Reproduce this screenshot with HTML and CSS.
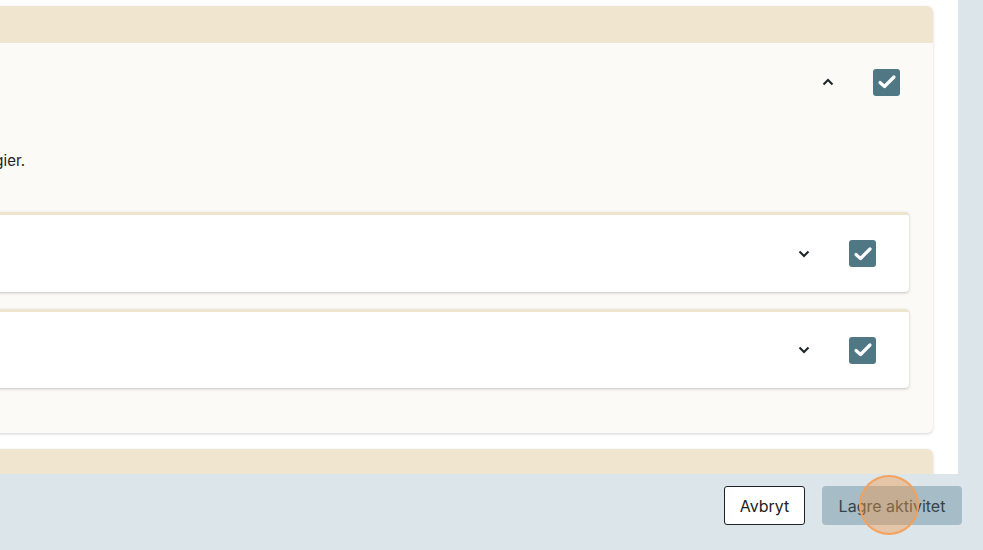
FILE: index.html
```html
<!DOCTYPE html>
<html lang="no">
<head>
<meta charset="utf-8">
<link rel="stylesheet" href="styles.css">
</head>
<body>
<div class="screen">
  <div class="top">
    <main class="main">
      <section class="card">
        <div class="card-head"></div>
        <div class="card-body">
          <div class="row">
            <span class="row-title"></span>
            <svg class="chev" width="12" height="8" viewBox="0 0 12 8"><path d="M1.5 6.5 L6 2 L10.5 6.5" fill="none" stroke="#1d2327" stroke-width="2"/></svg>
            <span class="check"><svg width="20" height="16" viewBox="0 0 20 16"><path d="M3 8.5 L7.5 12.5 L17 3" fill="none" stroke="#fff" stroke-width="3.2" stroke-linecap="round" stroke-linejoin="round"/></svg></span>
          </div>
          <p class="desc">Aktiviteten egner seg for å utforske nye læringsstrategier.</p>
          <div class="sub">
            <span class="row-title"></span>
            <svg class="chev" width="12" height="8" viewBox="0 0 12 8"><path d="M1.5 1.5 L6 6 L10.5 1.5" fill="none" stroke="#1d2327" stroke-width="2"/></svg>
            <span class="check"><svg width="20" height="16" viewBox="0 0 20 16"><path d="M3 8.5 L7.5 12.5 L17 3" fill="none" stroke="#fff" stroke-width="3.2" stroke-linecap="round" stroke-linejoin="round"/></svg></span>
          </div>
          <div class="sub">
            <span class="row-title"></span>
            <svg class="chev" width="12" height="8" viewBox="0 0 12 8"><path d="M1.5 1.5 L6 6 L10.5 1.5" fill="none" stroke="#1d2327" stroke-width="2"/></svg>
            <span class="check"><svg width="20" height="16" viewBox="0 0 20 16"><path d="M3 8.5 L7.5 12.5 L17 3" fill="none" stroke="#fff" stroke-width="3.2" stroke-linecap="round" stroke-linejoin="round"/></svg></span>
          </div>
        </div>
      </section>
      <section class="card">
        <div class="card-head"></div>
      </section>
    </main>
    <aside class="strip"></aside>
  </div>
  <footer class="footer">
    <button class="btn btn-cancel">Avbryt</button>
    <button class="btn btn-save">Lagre aktivitet</button>
    <span class="click-dot"></span>
  </footer>
</div>
</body>
</html>
```
FILE: styles.css
```css
* { box-sizing: border-box; }
html, body { margin: 0; padding: 0; }
body {
  font-family: Inter, "Noto Sans", sans-serif;
  color: #1d2327;
  background: #dbe5ea;
  width: 983px;
  height: 550px;
  overflow: hidden;
}
.screen { display: flex; flex-direction: column; height: 550px; }
.top { display: flex; height: 474px; }
.main {
  width: 958px;
  background: #fff;
  overflow: hidden;
  padding: 6px 25px 0 0;
  display: flex;
  flex-direction: column;
  gap: 16px;
}
.strip { flex: 1; background: #dbe5ea; }
.card {
  margin-left: -600px;
  border-radius: 0 6px 6px 0;
  background: #fbfaf6;
  box-shadow: 0 1px 3px rgba(0,0,0,0.18);
  flex-shrink: 0;
}
.card-head {
  height: 37px;
  background: #f0e6d0;
  border-radius: 0 6px 0 0;
}
.card-body { padding: 14px 24px 45px 24px; }
.row {
  display: flex;
  align-items: center;
  height: 50px;
  padding-right: 9px;
}
.row-title { flex: 1; }
.chev { display: block; margin-right: 39px; }
.check {
  width: 27px;
  height: 27px;
  border-radius: 3px;
  background: #4f7784;
  display: flex;
  align-items: center;
  justify-content: center;
}
.desc {
  margin: 43px 0 0 0;
  font-size: 15px;
  line-height: 22px;
  padding-left: 194px;
}
.sub {
  margin-top: 40px;
  height: 80px;
  background: #fff;
  border-top: 3px solid #efe5cf;
  border-radius: 4px;
  box-shadow: 0 1px 3px rgba(0,0,0,0.22);
  display: flex;
  align-items: center;
  padding-right: 33px;
}
.sub + .sub { margin-top: 17px; height: 79px; }
.footer {
  flex: 1;
  display: flex;
  justify-content: flex-end;
  align-items: flex-start;
  gap: 17px;
  padding: 12px 21px 0 0;
  position: relative;
}
.btn {
  font-family: Inter, "Noto Sans", sans-serif;
  font-size: 16px;
  height: 39px;
  border-radius: 3px;
  padding: 0 10px;
}
.btn-cancel {
  background: #fff;
  border: 1px solid #1d2327;
  color: #1d2327;
  width: 81px;
}
.btn-save {
  background: #a6bcc6;
  border: none;
  color: #34444c;
  width: 140px;
  border-radius: 4px;
}
.click-dot {
  position: absolute;
  left: 859px;
  top: 1px;
  width: 60px;
  height: 60px;
  border-radius: 50%;
  background: rgba(242, 150, 70, 0.4);
  border: 2px solid rgba(244, 160, 90, 0.95);
}
```
